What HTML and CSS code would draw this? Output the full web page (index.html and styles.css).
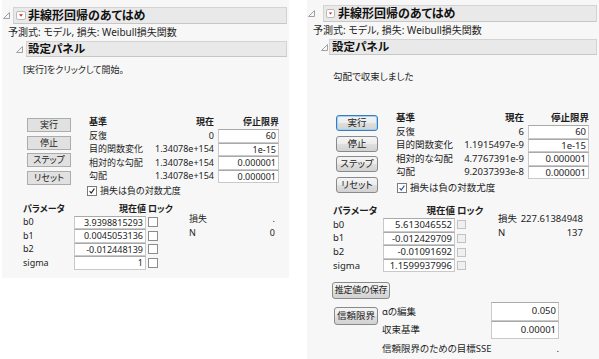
FILE: index.html
```html
<!DOCTYPE html>
<html lang="ja">
<head>
  <meta charset="UTF-8">
  <title>非線形回帰のあてはめ</title>
  <link rel="stylesheet" href="styles.css">
</head>
<body>
  <!-- 開始前 -->
  <div class="report report-left">
    <div class="outline">
      <svg class="tri" viewBox="0 0 7 7"><polygon points="6.5,0.5 6.5,6.5 0.5,6.5" /></svg>
      <div class="bar">
        <span class="menu"><svg viewBox="0 0 10 9"><polygon points="2.5,3 7.5,3 5,6" /></svg></span>
        <span class="title">非線形回帰のあてはめ</span>
      </div>
    </div>
    <div class="formula">予測式: モデル, 損失: Weibull損失関数</div>
    <div class="outline sub">
      <svg class="tri" viewBox="0 0 7 7"><polygon points="6.5,0.5 6.5,6.5 0.5,6.5" /></svg>
      <div class="bar">設定パネル</div>
    </div>
    <p class="msg">[実行]をクリックして開始。</p>

    <div class="controls">
      <div class="buttons">
        <div class="btn">実行</div>
        <div class="btn">停止</div>
        <div class="btn">ステップ</div>
        <div class="btn">リセット</div>
      </div>
      <div class="settings">
        <div class="crit">
          <b>基準</b><b class="num">現在</b><b class="num lim">停止限界</b>
          <span>反復</span><span class="num">0</span><span class="field">60</span>
          <span>目的関数変化</span><span class="num">1.34078e+154</span><span class="field">1e-15</span>
          <span>相対的な勾配</span><span class="num">1.34078e+154</span><span class="field">0.000001</span>
          <span>勾配</span><span class="num">1.34078e+154</span><span class="field">0.000001</span>
        </div>
        <div class="check"><span class="box on"><svg viewBox="0 0 10 10"><polyline points="2,5 4,7.5 8,2" /></svg></span>損失は負の対数尤度</div>
      </div>
    </div>

    <div class="params-row">
      <div class="params">
        <b>パラメータ</b><b class="num">現在値</b><b class="lock">ロック</b>
        <span>b0</span><span class="field">3.9398815293</span><span class="box"></span>
        <span>b1</span><span class="field">0.0045053136</span><span class="box"></span>
        <span>b2</span><span class="field">-0.012448139</span><span class="box"></span>
        <span>sigma</span><span class="field">1</span><span class="box"></span>
      </div>
      <div class="stats">
        <span>損失</span><span class="num">.</span>
        <span>N</span><span class="num">0</span>
      </div>
    </div>
  </div>

  <!-- 収束後 -->
  <div class="report report-right">
    <div class="outline">
      <svg class="tri" viewBox="0 0 7 7"><polygon points="6.5,0.5 6.5,6.5 0.5,6.5" /></svg>
      <div class="bar">
        <span class="menu"><svg viewBox="0 0 10 9"><polygon points="2.5,3 7.5,3 5,6" /></svg></span>
        <span class="title">非線形回帰のあてはめ</span>
      </div>
    </div>
    <div class="formula">予測式: モデル, 損失: Weibull損失関数</div>
    <div class="outline sub">
      <svg class="tri" viewBox="0 0 7 7"><polygon points="6.5,0.5 6.5,6.5 0.5,6.5" /></svg>
      <div class="bar">設定パネル</div>
    </div>
    <p class="msg">勾配で収束しました</p>

    <div class="controls">
      <div class="buttons">
        <div class="btn default">実行</div>
        <div class="btn">停止</div>
        <div class="btn">ステップ</div>
        <div class="btn">リセット</div>
      </div>
      <div class="settings">
        <div class="crit">
          <b>基準</b><b class="num">現在</b><b class="num lim">停止限界</b>
          <span>反復</span><span class="num">6</span><span class="field">60</span>
          <span>目的関数変化</span><span class="num">1.1915497e-9</span><span class="field">1e-15</span>
          <span>相対的な勾配</span><span class="num">4.7767391e-9</span><span class="field">0.000001</span>
          <span>勾配</span><span class="num">9.2037393e-8</span><span class="field">0.000001</span>
        </div>
        <div class="check"><span class="box on"><svg viewBox="0 0 10 10"><polyline points="2,5 4,7.5 8,2" /></svg></span>損失は負の対数尤度</div>
      </div>
    </div>

    <div class="params-row">
      <div class="params">
        <b>パラメータ</b><b class="num">現在値</b><b class="lock">ロック</b>
        <span>b0</span><span class="field">5.613046552</span><span class="box off"></span>
        <span>b1</span><span class="field">-0.012429709</span><span class="box off"></span>
        <span>b2</span><span class="field">-0.01091692</span><span class="box off"></span>
        <span>sigma</span><span class="field">1.1599937996</span><span class="box off"></span>
      </div>
      <div class="stats">
        <span>損失</span><span class="num">227.61384948</span>
        <span>N</span><span class="num">137</span>
      </div>
    </div>

    <div class="btn save">推定値の保存</div>

    <div class="limits">
      <div class="btn conf">信頼限界</div>
      <div class="alpha">
        <span>αの編集</span><span class="field">0.050</span>
        <span>収束基準</span><span class="field">0.00001</span>
        <span>信頼限界のための目標SSE</span><span class="num">.</span>
      </div>
    </div>
  </div>
</body>
</html>
```

FILE: styles.css
```css
* {
  margin: 0;
  padding: 0;
  box-sizing: border-box;
}

body {
  font-family: "Noto Sans", "Noto Sans CJK JP", sans-serif;
  font-feature-settings: "palt";
  font-size: 9px;
  line-height: 12px;
  white-space: nowrap;
  color: #1e1e1e;
  background: #ffffff;
  display: flex;
  align-items: flex-start;
}

b {
  font-weight: 700;
}

/* パネル本体 */
.report {
  background: #f7f7f7;
  flex: none;
}

.report-left {
  width: 287px;
  height: 278px;
  margin-left: 2px;
}

.report-right {
  width: 292px;
  height: 359px;
  margin-left: 18px;
  font-size: 9.5px;
}

/* アウトラインの見出し */
.outline {
  display: flex;
  align-items: center;
  margin-right: 2px;
}

.tri {
  width: 7px;
  height: 7px;
  flex: none;
}

.tri polygon {
  fill: none;
  stroke: #a0a0a0;
  stroke-width: 1;
}

.bar {
  flex: 1;
  display: flex;
  align-items: center;
  height: 17px;
  background: #e9e9e9;
  border: 1px solid #d3d3d3;
  border-bottom-color: #c6c6c6;
  font-weight: 700;
  font-size: 12px;
  color: #111;
}

.menu {
  width: 10px;
  height: 9px;
  background: #fff;
  border: 1px solid #b9b9b9;
  border-radius: 2px;
  display: flex;
  margin-right: 2px;
}

.menu svg {
  width: 100%;
  height: 100%;
}

.menu polygon {
  fill: #e0201b;
}

.report-left .outline {
  margin-top: 7px;
  padding-left: 1px;
}

.report-left .outline .tri {
  margin-right: 3px;
}

.report-left .outline .bar {
  padding-left: 2px;
}

.report-left .formula {
  margin: 2px 0 0 6px;
}

.formula {
  height: 12px;
  font-size: 10px;
}

.report-left .outline.sub {
  margin-top: 3px;
  padding-left: 14px;
}

.outline.sub .bar {
  height: 16px;
  font-size: 11.5px;
  padding-left: 1px;
}

.msg {
  height: 12px;
}

.report-left .msg {
  margin: 7px 0 0 21px;
}

/* 実行ボタンと基準 */
.controls {
  display: flex;
  align-items: flex-start;
}

.report-left .controls {
  margin: 39px 0 0 25px;
}

.buttons {
  display: flex;
  flex-direction: column;
  flex: none;
}

.settings {
  display: flex;
  flex-direction: column;
}

.report-left .buttons {
  width: 44px;
  gap: 3.5px;
  padding-top: 3px;
  margin-right: 18px;
}

.btn {
  display: flex;
  align-items: center;
  justify-content: center;
  color: #222;
}

.report-left .btn {
  height: 14px;
  background: #e1e1e1;
  border: 1px solid #acacac;
}

.report-right .btn {
  height: 16px;
  background: linear-gradient(#f4f4f4, #ececec 48%, #dedede 52%, #d2d2d2);
  border: 1px solid #8a8a8a;
  border-radius: 3px;
}

.report-right .btn.default {
  border-color: #3d7bbd;
  box-shadow: inset 0 0 0 1px #9fd2f3;
}

.crit,
.params,
.alpha,
.stats {
  display: grid;
  align-items: center;
}

.crit {
  grid-template-columns: 61px 64px 65px;
  grid-template-rows: 14px;
  grid-auto-rows: 13.5px;
}

.crit .lim,
.crit .field {
  margin-left: 4px;
}

.num {
  text-align: right;
}

.field {
  height: 100%;
  background: #ffffff;
  border: 1px solid #c9c9c9;
  border-top-color: #a9a9a9;
  text-align: right;
  padding-right: 2px;
  line-height: 11px;
}

/* チェックボックス */
.check {
  display: flex;
  align-items: center;
  height: 13px;
  gap: 3px;
}

.report-left .check {
  margin: 1px 0 0 -2px;
}

.box {
  width: 10px;
  height: 10px;
  background: #fff;
  border: 1px solid #7a7a7a;
  display: block;
}

.box.on svg {
  width: 100%;
  height: 100%;
  display: block;
}

.box.on polyline {
  fill: none;
  stroke: #222;
  stroke-width: 1.4;
}

.report-right .box.on polyline {
  stroke: #2b4f9e;
}

.params .box {
  margin-left: 2px;
  border-color: #8c8c8c;
}

.params .box.off {
  width: 9px;
  height: 9px;
  background: #f0f0f0;
  border-color: #c2c2c2;
}

/* パラメータ */
.params-row {
  display: flex;
  align-items: flex-start;
}

.params {
  grid-template-columns: 51px 72px 30px;
  grid-auto-rows: 13.5px;
}

.params .lock {
  margin-left: 2px;
}

.report-left .params-row {
  margin: 5px 0 0 21px;
}

.stats {
  grid-template-columns: auto 1fr;
  grid-auto-rows: 14px;
  width: 86px;
}

.report-left .stats {
  margin: 10px 0 0 13px;
}

/* 右: 収束後 */
.report-right .outline {
  margin-top: 5px;
  padding-left: 1px;
}

.report-right .outline .tri {
  margin-right: 8px;
}

.report-right .outline .bar {
  padding-left: 2px;
}

.report-right .menu {
  width: 9px;
  margin-right: 3px;
}

.report-right .formula {
  margin: 2px 0 0 6px;
}

.report-right .outline.sub {
  margin-top: 3px;
  padding-left: 14px;
}

.report-right .outline.sub .tri {
  margin-right: 1px;
}

.report-right .msg {
  margin: 16px 0 0 26px;
}

.report-right .controls {
  margin: 28px 0 0 29px;
}

.report-right .buttons {
  width: 42px;
  gap: 4.5px;
  padding-top: 4px;
  margin-right: 18px;
}

.report-right .crit {
  grid-template-columns: 62px 66px 65px;
}

.report-right .check {
  margin: 2.5px 0 0 1px;
}

.report-right .params-row {
  margin: 10px 0 0 26px;
}

.report-right .params {
  grid-template-columns: 50px 72px 30px;
  grid-auto-rows: 13.6px;
}

.report-right .stats {
  margin: 7px 0 0 13px;
  width: 85px;
}

.report-right .save {
  width: 58px;
  height: 17px;
  margin: 9.5px 0 0 25px;
  font-size: 9px;
  letter-spacing: -0.2px;
}

.limits {
  display: flex;
  align-items: flex-start;
  margin: 3.5px 0 0 27px;
}

.report-right .conf {
  width: 44px;
  height: 18px;
  margin: 4.5px 4px 0 0;
}

.alpha {
  grid-template-columns: 109px 68px;
  grid-auto-rows: 18.5px;
}

.alpha .field {
  line-height: 16px;
}
```
